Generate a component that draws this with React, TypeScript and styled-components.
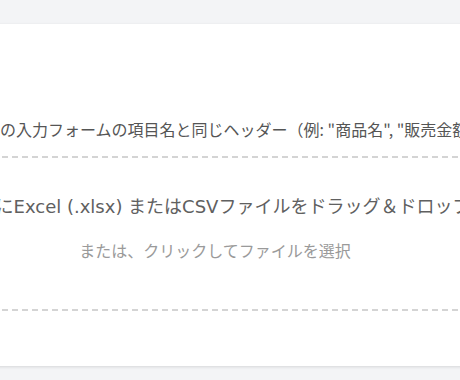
import React from "react";
import styled, { createGlobalStyle } from "styled-components";

const GlobalStyle = createGlobalStyle`
  html, body {
    margin: 0;
    padding: 0;
    background: #f3f4f6;
    overflow: hidden;
  }
  body {
    font-family: "Noto Sans CJK JP", "Noto Sans", sans-serif;
    color: #555;
  }
`;

const Page = styled.div`
  padding-top: 24px;
  height: 380px;
  box-sizing: border-box;
`;

const Card = styled.section`
  background: #ffffff;
  width: 574px;
  margin-left: -72px;
  padding: 93px 24px 55px;
  box-sizing: border-box;
  box-shadow: 0 1px 3px rgba(0, 0, 0, 0.12);
`;

const Hint = styled.p`
  margin: 0;
  font-size: 16px;
  line-height: 24px;
  color: #555;
  white-space: nowrap;
`;

const DropZone = styled.div`
  margin-top: 15px;
  border: 2px dashed #d4d4d4;
  padding: 35px 0 47px;
  display: flex;
  flex-direction: column;
  align-items: center;
  gap: 18px;
  cursor: pointer;
`;

const DropText = styled.p<{ $muted?: boolean }>`
  margin: 0;
  white-space: nowrap;
  font-family: ${(p) =>
    p.$muted
      ? `"Noto Sans CJK JP", sans-serif`
      : `"DejaVu Sans", "Noto Sans CJK JP", sans-serif`};
  font-size: ${(p) => (p.$muted ? "16px" : "18px")};
  line-height: ${(p) => (p.$muted ? "24px" : "27px")};
  color: ${(p) => (p.$muted ? "#9a9a9a" : "#606060")};
`;

export default function App() {
  return (
    <>
      <GlobalStyle />
      <Page>
        <Card>
          <Hint>
            アプリの入力フォームの項目名と同じヘッダー（例: "商品名", "販売金額"）を1行目に入れてください。
          </Hint>
          <DropZone>
            <DropText>ここにExcel (.xlsx) またはCSVファイルをドラッグ＆ドロップ</DropText>
            <DropText $muted>または、クリックしてファイルを選択</DropText>
          </DropZone>
        </Card>
      </Page>
    </>
  );
}
